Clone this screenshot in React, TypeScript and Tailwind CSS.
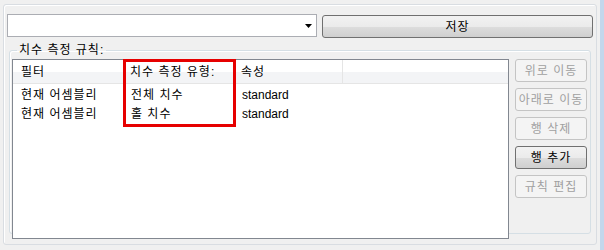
const FONT = { fontFamily: '"Liberation Sans", "Noto Sans CJK KR", sans-serif' };

const ROWS = [
  { filter: '현재 어셈블리', type: '전체 치수', attr: 'standard' },
  { filter: '현재 어셈블리', type: '홀 치수', attr: 'standard' },
];

const SIDE_BUTTONS = [
  { label: '위로 이동', enabled: false },
  { label: '아래로 이동', enabled: false },
  { label: '행 삭제', enabled: false },
  { label: '행 추가', enabled: true },
  { label: '규칙 편집', enabled: false },
];

const enabledBtn =
  'border-[#707070] text-black bg-[linear-gradient(to_bottom,#f2f2f2_0%,#ebebeb_50%,#dddddd_51%,#cfcfcf_100%)]';
const disabledBtn = 'border-[#c4c4c4] text-[#a0a0a0] bg-[#f4f4f4]';

function SideButton({ label, enabled }: { label: string; enabled: boolean }) {
  return (
    <button
      className={`h-[23px] w-[72px] rounded-[3px] border text-[12px] tracking-[1px] leading-none flex items-center justify-center ${
        enabled ? enabledBtn : disabledBtn
      }`}
    >
      {label}
    </button>
  );
}

export default function App() {
  return (
    <div className="w-[604px] h-[250px] bg-[#f0f0f0] flex text-[12px] text-black" style={FONT}>
      <div className="flex-1 pl-[3px] pt-[4px]">
        {/* outer frame */}
        <div className="w-[594px] h-[241px] rounded-[3px] border border-[#d9dde2] shadow-[inset_1px_1px_0_#ffffff] pl-[3px] pt-[9px]">
          <div className="flex gap-[5px]">
            {/* combobox */}
            <div className="w-[310px] h-[23px] bg-white border border-[#abadb3] flex items-center justify-end pr-[4px]">
              <svg width="7" height="4" viewBox="0 0 7 4">
                <path d="M0 0H7L3.5 4Z" fill="#000" />
              </svg>
            </div>
            <button className={`w-[271px] h-[23px] mt-[1px] rounded-[3px] border tracking-[1px] ${enabledBtn} flex items-center justify-center`}>
              저장
            </button>
          </div>

          {/* group box */}
          <fieldset className="ml-[2px] mt-[4px] w-[582px] h-[192px] rounded-[3px] border border-[#d5dfe5] shadow-[inset_1px_1px_0_#ffffff] pl-[2px]">
            <legend className="ml-[5px] px-[2px] leading-[16px] tracking-[1px]">치수 측정 규칙:</legend>
            <div className="flex gap-[6px] mt-[1px]">
              {/* list view */}
              <div className="relative w-[497px] h-[180px] bg-white border border-[#828790]">
                <div className="flex h-[24px] border-b border-[#e5e5e5] tracking-[1px] bg-[linear-gradient(to_bottom,#ffffff_0%,#ffffff_50%,#f3f4f6_51%,#f3f4f6_100%)]">
                  <div className="w-[111px] pl-[8px] flex items-center border-r border-[#e5e5e5]">필터</div>
                  <div className="w-[110px] pl-[6px] flex items-center border-r border-[#e5e5e5]">치수 측정 유형:</div>
                  <div className="w-[109px] pl-[7px] flex items-center border-r border-[#e5e5e5]">속성</div>
                  <div className="flex-1" />
                </div>
                <div className="pt-[1px]">
                  {ROWS.map((r, i) => (
                    <div key={i} className="flex h-[19px] items-center">
                      <div className="w-[111px] pl-[8px] tracking-[1px]">{r.filter}</div>
                      <div className="w-[110px] pl-[7px] tracking-[1px]">{r.type}</div>
                      <div className="w-[109px] pl-[8px]">{r.attr}</div>
                    </div>
                  ))}
                </div>
                {/* red highlight annotation */}
                <div className="absolute left-[110px] top-[-1px] w-[113px] h-[68px] border-[3px] border-[#e60000]" />
              </div>

              {/* side buttons */}
              <div className="flex flex-col gap-[6px]">
                {SIDE_BUTTONS.map((b) => (
                  <SideButton key={b.label} label={b.label} enabled={b.enabled} />
                ))}
              </div>
            </div>
          </fieldset>
        </div>
      </div>
      <div className="w-[4px] bg-[#c3d7ec]" />
    </div>
  );
}
